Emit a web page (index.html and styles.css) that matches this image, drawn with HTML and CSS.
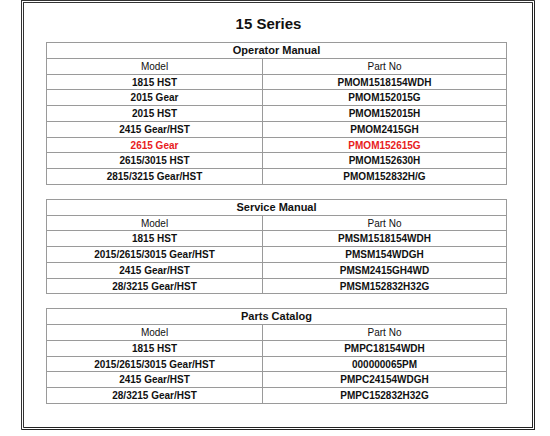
FILE: index.html
```html
<!DOCTYPE html>
<html>
<head>
<meta charset="utf-8">
<link rel="stylesheet" href="styles.css">
</head>
<body>
<div class="frame">
  <h1 class="title">15 Series</h1>

  <div class="tbl">
    <div class="cap">Operator Manual</div>
    <div class="row head"><div class="c1">Model</div><div class="c2">Part No</div></div>
    <div class="row"><div class="c1">1815 HST</div><div class="c2">PMOM1518154WDH</div></div>
    <div class="row"><div class="c1">2015 Gear</div><div class="c2">PMOM152015G</div></div>
    <div class="row"><div class="c1">2015 HST</div><div class="c2">PMOM152015H</div></div>
    <div class="row"><div class="c1">2415 Gear/HST</div><div class="c2">PMOM2415GH</div></div>
    <div class="row red"><div class="c1">2615 Gear</div><div class="c2">PMOM152615G</div></div>
    <div class="row"><div class="c1">2615/3015 HST</div><div class="c2">PMOM152630H</div></div>
    <div class="row"><div class="c1">2815/3215 Gear/HST</div><div class="c2">PMOM152832H/G</div></div>
  </div>

  <div class="tbl">
    <div class="cap">Service Manual</div>
    <div class="row head"><div class="c1">Model</div><div class="c2">Part No</div></div>
    <div class="row"><div class="c1">1815 HST</div><div class="c2">PMSM1518154WDH</div></div>
    <div class="row"><div class="c1">2015/2615/3015 Gear/HST</div><div class="c2">PMSM154WDGH</div></div>
    <div class="row"><div class="c1">2415 Gear/HST</div><div class="c2">PMSM2415GH4WD</div></div>
    <div class="row"><div class="c1">28/3215 Gear/HST</div><div class="c2">PMSM152832H32G</div></div>
  </div>

  <div class="tbl">
    <div class="cap">Parts Catalog</div>
    <div class="row head"><div class="c1">Model</div><div class="c2">Part No</div></div>
    <div class="row"><div class="c1">1815 HST</div><div class="c2">PMPC18154WDH</div></div>
    <div class="row"><div class="c1">2015/2615/3015 Gear/HST</div><div class="c2">000000065PM</div></div>
    <div class="row"><div class="c1">2415 Gear/HST</div><div class="c2">PMPC24154WDGH</div></div>
    <div class="row"><div class="c1">28/3215 Gear/HST</div><div class="c2">PMPC152832H32G</div></div>
  </div>
</div>
</body>
</html>
```

FILE: styles.css
```css
html, body {
  margin: 0;
  padding: 0;
  background: #fff;
}
body {
  font-family: "Liberation Sans", Arial, sans-serif;
  color: #111;
}
.frame {
  margin-left: 21px;
  width: 514px;
  height: 430px;
  box-sizing: border-box;
  border: 3px double #333;
  border-right-color: #222;
  border-bottom-color: #222;
  background: #fff;
}
.title {
  margin: 12px 0 0 0;
  padding-right: 19px;
  font-size: 15px;
  line-height: 17px;
  font-weight: bold;
  text-align: center;
}
.tbl {
  margin: 10px 0 0 22px;
  width: 461px;
  box-sizing: border-box;
  border: 1px solid #9a9a9a;
  border-bottom: 0;
}
.tbl + .tbl {
  margin-top: 14px;
}
.cap {
  height: 14.75px;
  line-height: 15px;
  border-bottom: 1px solid #9a9a9a;
  text-align: center;
  font-size: 11px;
  font-weight: bold;
}
.row {
  display: grid;
  grid-template-columns: 215px 1fr;
  height: 14.75px;
  border-bottom: 1px solid #9a9a9a;
  font-size: 10px;
  font-weight: bold;
  line-height: 15px;
  text-align: center;
}
.row .c2 {
  border-left: 1px solid #9a9a9a;
}
.row.head {
  font-weight: normal;
}
.row.red {
  color: #e8201c;
}
```
